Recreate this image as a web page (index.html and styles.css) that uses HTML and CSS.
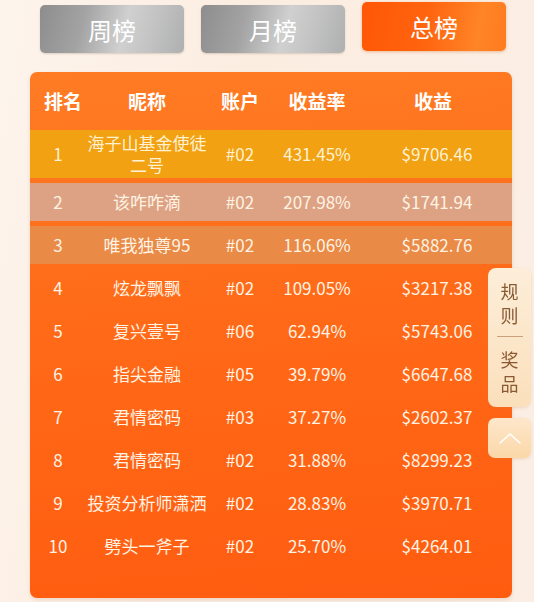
FILE: index.html
```html
<!DOCTYPE html>
<html lang="zh-CN">
<head>
<meta charset="utf-8">
<title>排行榜</title>
<link rel="stylesheet" href="styles.css">
</head>
<body>
<div class="page">
  <div class="tabs">
    <div class="tab">周榜</div>
    <div class="tab">月榜</div>
    <div class="tab active">总榜</div>
  </div>
  <div class="board">
    <div class="row head">
      <div class="c-rank">排名</div>
      <div class="c-name">昵称</div>
      <div class="c-acc">账户</div>
      <div class="c-rate">收益率</div>
      <div class="c-profit">收益</div>
    </div>
    <div class="rows">
      <div class="row r1"><div class="c-rank">1</div><div class="c-name">海子山基金使徒二号</div><div class="c-acc">#02</div><div class="c-rate">431.45%</div><div class="c-profit">$9706.46</div></div>
      <div class="row r2"><div class="c-rank">2</div><div class="c-name">该咋咋滴</div><div class="c-acc">#02</div><div class="c-rate">207.98%</div><div class="c-profit">$1741.94</div></div>
      <div class="row r3"><div class="c-rank">3</div><div class="c-name">唯我独尊95</div><div class="c-acc">#02</div><div class="c-rate">116.06%</div><div class="c-profit">$5882.76</div></div>
      <div class="row"><div class="c-rank">4</div><div class="c-name">炫龙飘飘</div><div class="c-acc">#02</div><div class="c-rate">109.05%</div><div class="c-profit">$3217.38</div></div>
      <div class="row"><div class="c-rank">5</div><div class="c-name">复兴壹号</div><div class="c-acc">#06</div><div class="c-rate">62.94%</div><div class="c-profit">$5743.06</div></div>
      <div class="row"><div class="c-rank">6</div><div class="c-name">指尖金融</div><div class="c-acc">#05</div><div class="c-rate">39.79%</div><div class="c-profit">$6647.68</div></div>
      <div class="row"><div class="c-rank">7</div><div class="c-name">君情密码</div><div class="c-acc">#03</div><div class="c-rate">37.27%</div><div class="c-profit">$2602.37</div></div>
      <div class="row"><div class="c-rank">8</div><div class="c-name">君情密码</div><div class="c-acc">#02</div><div class="c-rate">31.88%</div><div class="c-profit">$8299.23</div></div>
      <div class="row"><div class="c-rank">9</div><div class="c-name">投资分析师潇洒</div><div class="c-acc">#02</div><div class="c-rate">28.83%</div><div class="c-profit">$3970.71</div></div>
      <div class="row"><div class="c-rank">10</div><div class="c-name">劈头一斧子</div><div class="c-acc">#02</div><div class="c-rate">25.70%</div><div class="c-profit">$4264.01</div></div>
    </div>
  </div>
</div>
<div class="side">
  <div class="side-panel">
    <div class="side-item">规<br>则</div>
    <div class="side-line"></div>
    <div class="side-item">奖<br>品</div>
  </div>
  <div class="side-top">
    <svg width="24" height="14" viewBox="0 0 24 14"><path d="M2 12 L12 3 L22 12" fill="none" stroke="#ffffff" stroke-width="1.6" stroke-linecap="round" stroke-linejoin="round"/></svg>
  </div>
</div>
</body>
</html>
```

FILE: styles.css
```css
html, body {
  margin: 0;
  padding: 0;
}
body {
  width: 534px;
  height: 602px;
  overflow: hidden;
  background: linear-gradient(100deg, #fdf4ec 0%, #fcede1 40%, #fbeee4 100%);
  font-family: "Noto Sans CJK SC", "Microsoft YaHei", sans-serif;
}
.page {
  padding: 0 0 0 30px;
}
.tabs {
  display: flex;
  align-items: flex-start;
  gap: 17px;
  padding-left: 10px;
  height: 72px;
}
.tab {
  width: 144px;
  height: 48px;
  margin-top: 5px;
  border-radius: 5px;
  box-sizing: border-box;
  display: flex;
  align-items: center;
  justify-content: center;
  color: #ffffff;
  font-size: 24px;
  letter-spacing: 0;
  background: linear-gradient(105deg, #8d8d8d 0%, #a3a3a3 30%, #cfd0cf 58%, #c3c4c3 75%, #aeb0af 100%);
  box-shadow: 0 1px 2px rgba(120, 100, 80, 0.25);
}
.tab.active {
  margin-top: 2px;
  height: 49px;
  background: linear-gradient(100deg, #ff5706 0%, #ff640f 45%, #ff8526 80%, #ff7a20 100%);
  box-shadow: 0 1px 3px rgba(200, 90, 20, 0.35);
}
.board {
  width: 482px;
  height: 526px;
  box-sizing: border-box;
  border-radius: 7px;
  background: linear-gradient(175deg, #ff7c24 0%, #ff6a18 45%, #ff5c10 100%);
  color: #fff3e4;
  padding-bottom: 33px;
  box-shadow: 0 2px 4px rgba(180, 120, 80, 0.2);
}
.row {
  display: grid;
  grid-template-columns: 56px 122px 64px 90px 150px;
  align-items: center;
  min-height: 38px;
  font-size: 17px;
  line-height: 20px;
  text-align: center;
}
.row.head {
  height: 58px;
  font-size: 19px;
  font-weight: bold;
  color: #ffffff;
}
.head .c-rank {
  padding-left: 10px;
}
.head .c-profit {
  padding-right: 8px;
}
.rows {
  display: flex;
  flex-direction: column;
  gap: 5px;
}
.r1 {
  background: #f1a112;
  padding: 2px 0;
  line-height: 22px;
  color: #fff1d2;
}
.r2 {
  background: #dda283;
}
.r3 {
  background: #e98a47;
}
.side {
  position: fixed;
  left: 488px;
  top: 268px;
  width: 43px;
}
.side-panel {
  height: 139px;
  border-radius: 8px;
  background: linear-gradient(180deg, #fdeed9 0%, #fbdfbb 100%);
  box-shadow: 0 1px 3px rgba(200, 140, 80, 0.25);
  display: flex;
  flex-direction: column;
  align-items: center;
  padding-top: 11px;
  box-sizing: border-box;
  color: #8a5b33;
}
.side-item {
  font-size: 18px;
  line-height: 24px;
  text-align: center;
}
.side-line {
  width: 26px;
  height: 1px;
  background: #c9a27c;
  margin: 9px 0 10px;
}
.side-top {
  margin-top: 11px;
  height: 40px;
  border-radius: 7px;
  background: linear-gradient(180deg, #fde7cb 0%, #fbd7a8 100%);
  box-shadow: 0 1px 3px rgba(200, 140, 80, 0.25);
  display: flex;
  align-items: center;
  justify-content: center;
}
```
